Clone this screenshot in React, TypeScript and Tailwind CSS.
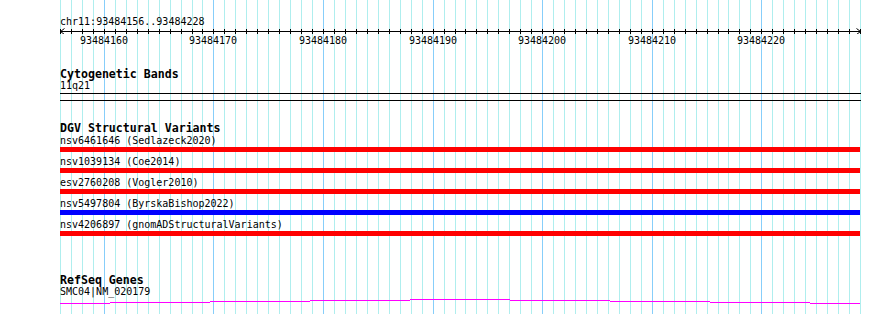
import React from 'react'

const START = 93484156
const BASES = 73
const LEFT = 60
const WIDTH = 800
const step = WIDTH / BASES

const baseX = (i: number) => Math.round(LEFT + i * step)

const variants = [
    { label: "nsv6461646 (Sedlazeck2020)", color: "bg-[#ff0000]" },
    { label: "nsv1039134 (Coe2014)", color: "bg-[#ff0000]" },
    { label: "esv2760208 (Vogler2010)", color: "bg-[#ff0000]" },
    { label: "nsv5497804 (ByrskaBishop2022)", color: "bg-[#0000ff]" },
    { label: "nsv4206897 (gnomADStructuralVariants)", color: "bg-[#ff0000]" },
]

// intron line of the gene, drawn as steps of 100px
const geneSteps = [
    [60, 110, 303], [110, 210, 302], [210, 310, 301], [310, 410, 300], [410, 510, 299],
    [510, 610, 300], [610, 710, 301], [710, 810, 302], [810, 860, 303],
]

const Grid = () => {
    const lines = []
    for (let i = 0; i <= BASES; i++) {
        const major = (START + i) % 10 === 0
        lines.push(<rect key={i} x={baseX(i)} y={0} width={1} height={314} fill={major ? "#87cefa" : "#afeeee"} />)
    }
    return <svg className="absolute inset-0" width={890} height={314}>
        {lines}
        {geneSteps.map(([x1, x2, y]) => <rect key={x1} x={x1} y={y} width={x2 - x1} height={1} fill="#ff00ff" />)}
    </svg>
}

const Ruler = () => {
    const ticks = []
    for (let i = 0; i <= BASES; i++) {
        ticks.push(<rect key={i} x={baseX(i) - LEFT} y={1} width={1} height={5} fill="#000" />)
    }
    const labels = []
    for (let i = 0; i <= BASES; i++) {
        if ((START + i) % 10 === 0) labels.push({ x: baseX(i) - LEFT, text: String(START + i) })
    }
    return <div>
        <p className="h-[13px] leading-[13px]">chr11:{START}..{START + BASES - 1}</p>
        <svg width={801} height={6} className="block">
            <rect x={0} y={3} width={801} height={1} fill="#000" />
            {ticks}
            <path d="M4.5 0.5 L0.5 3.5 L4.5 6.5" stroke="#000" fill="none" />
            <path d="M796.5 0.5 L800.5 3.5 L796.5 6.5" stroke="#000" fill="none" />
        </svg>
        <div className="relative h-[13px] leading-[13px]">
            {labels.map((l) => (
                <span key={l.text} className="absolute top-0 -translate-x-1/2" style={{ left: l.x }}>{l.text}</span>
            ))}
        </div>
    </div>
}

const Title = ({ children }: { children: React.ReactNode }) =>
    <p className="relative top-[1px] h-[13px] leading-[13px] font-bold text-[11.6px]">{children}</p>

export default function App() {
    return <div className="relative w-[890px] h-[314px] bg-white overflow-hidden text-black text-[10px] font-['DejaVu_Sans_Mono',monospace]">
        <Grid />
        <div className="relative pl-[60px] pt-[15px] w-[861px]">
            <Ruler />

            {/* cytogenetic bands */}
            <div className="mt-[20px]">
                <Title>Cytogenetic Bands</Title>
                <p className="h-[13px] leading-[13px] -mt-[1px]">11q21</p>
                <div className="mt-[1px] h-[8px] border-y border-black" />
            </div>

            {/* dgv */}
            <div className="mt-[20px]">
                <Title>DGV Structural Variants</Title>
                <div className="flex flex-col gap-[3px]">
                    {variants.map((v) => (
                        <div key={v.label}>
                            <p className="h-[13px] leading-[13px]">{v.label}</p>
                            <div className={`h-[5px] w-[800px] ${v.color}`} />
                        </div>
                    ))}
                </div>
            </div>

            {/* refseq */}
            <div className="mt-[37px]">
                <Title>RefSeq Genes</Title>
                <p className="h-[13px] leading-[13px] -mt-[1px]">SMC04|NM_020179</p>
            </div>
        </div>
    </div>
}
